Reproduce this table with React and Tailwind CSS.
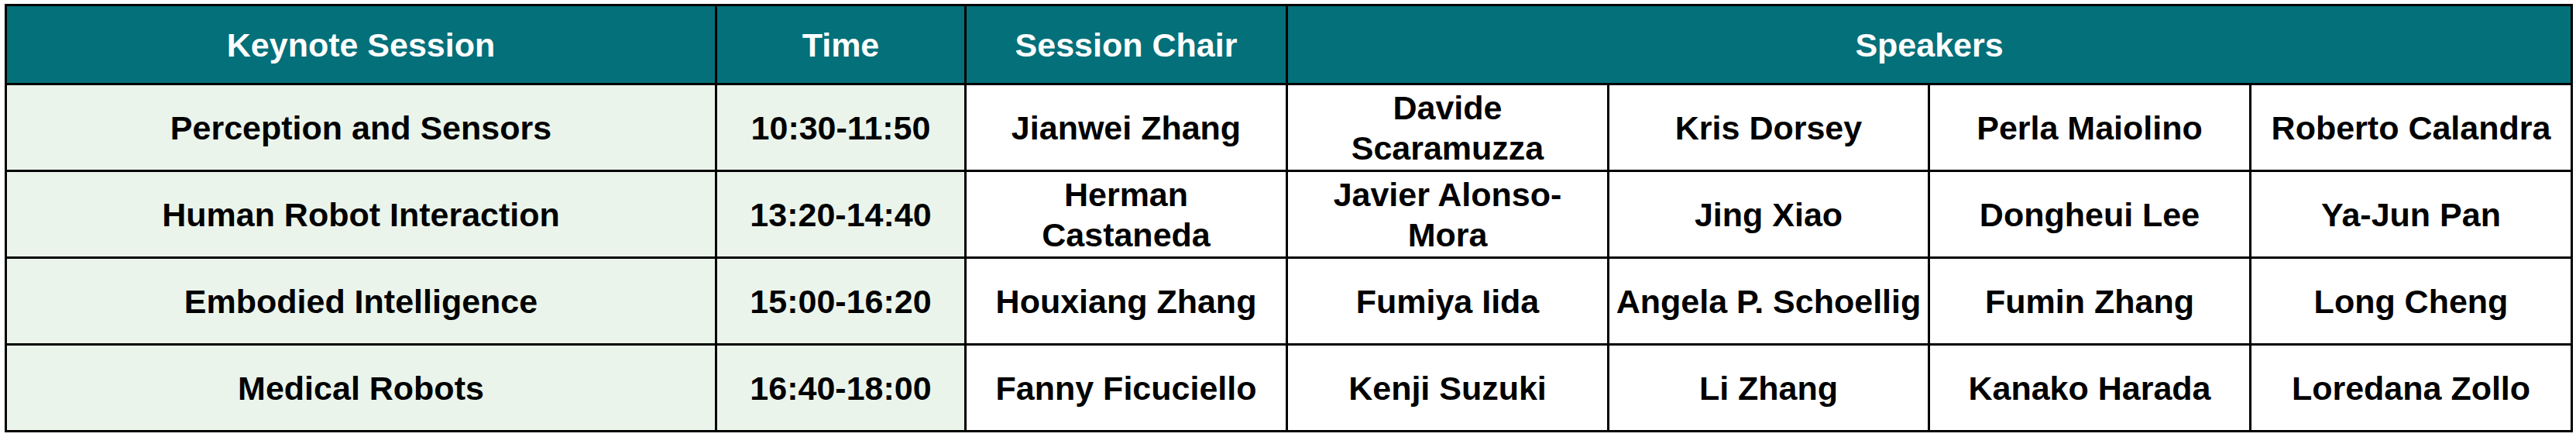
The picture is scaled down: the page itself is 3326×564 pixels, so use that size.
import React from 'react';

const sessions = [
  {
    title: 'Perception and Sensors',
    time: '10:30-11:50',
    chair: ['Jianwei Zhang'],
    speakers: [['Davide', 'Scaramuzza'], ['Kris Dorsey'], ['Perla Maiolino'], ['Roberto Calandra']],
  },
  {
    title: 'Human Robot Interaction',
    time: '13:20-14:40',
    chair: ['Herman', 'Castaneda'],
    speakers: [['Javier Alonso-', 'Mora'], ['Jing Xiao'], ['Dongheui Lee'], ['Ya-Jun Pan']],
  },
  {
    title: 'Embodied Intelligence',
    time: '15:00-16:20',
    chair: ['Houxiang Zhang'],
    speakers: [['Fumiya Iida'], ['Angela P. Schoellig'], ['Fumin Zhang'], ['Long Cheng']],
  },
  {
    title: 'Medical Robots',
    time: '16:40-18:00',
    chair: ['Fanny Ficuciello'],
    speakers: [['Kenji Suzuki'], ['Li Zhang'], ['Kanako Harada'], ['Loredana Zollo']],
  },
];

// names that wrap in the original are split into lines
function Lines({ lines }) {
  return lines.map((l, i) => (
    <React.Fragment key={i}>
      {i > 0 && <br />}
      {l}
    </React.Fragment>
  ));
}

export default function App() {
  const th = 'border-[3px] border-black bg-[#03707a] text-white font-bold text-center align-middle p-0';
  const td = 'border-[3px] border-black text-black font-bold text-center align-middle p-0 whitespace-nowrap';

  return (
    <div className="w-[3326px] h-[564px] bg-white pt-[5px] pl-[6px]">
      <table
        className="table-fixed border-collapse w-[3316px] text-[43px] leading-[52px]"
        style={{ fontFamily: '"Liberation Sans", Arial, sans-serif' }}
      >
        <colgroup>
          <col className="w-[917px]" />
          <col className="w-[322px]" />
          <col className="w-[415px]" />
          <col className="w-[415px]" />
          <col className="w-[414px]" />
          <col className="w-[415px]" />
          <col className="w-[415px]" />
        </colgroup>
        <thead>
          <tr className="h-[102px]">
            <th className={th}>Keynote Session</th>
            <th className={th}>Time</th>
            <th className={th}>Session Chair</th>
            <th className={th} colSpan={4}>Speakers</th>
          </tr>
        </thead>
        <tbody>
          {sessions.map((s) => (
            <tr key={s.title} className="h-[112px]">
              <td className={`${td} bg-[#eaf4eb]`}>{s.title}</td>
              <td className={`${td} bg-[#eaf4eb]`}>{s.time}</td>
              <td className={`${td} bg-white`}>
                <Lines lines={s.chair} />
              </td>
              {s.speakers.map((sp, i) => (
                <td key={i} className={`${td} bg-white`}>
                  <Lines lines={sp} />
                </td>
              ))}
            </tr>
          ))}
        </tbody>
      </table>
    </div>
  );
}
